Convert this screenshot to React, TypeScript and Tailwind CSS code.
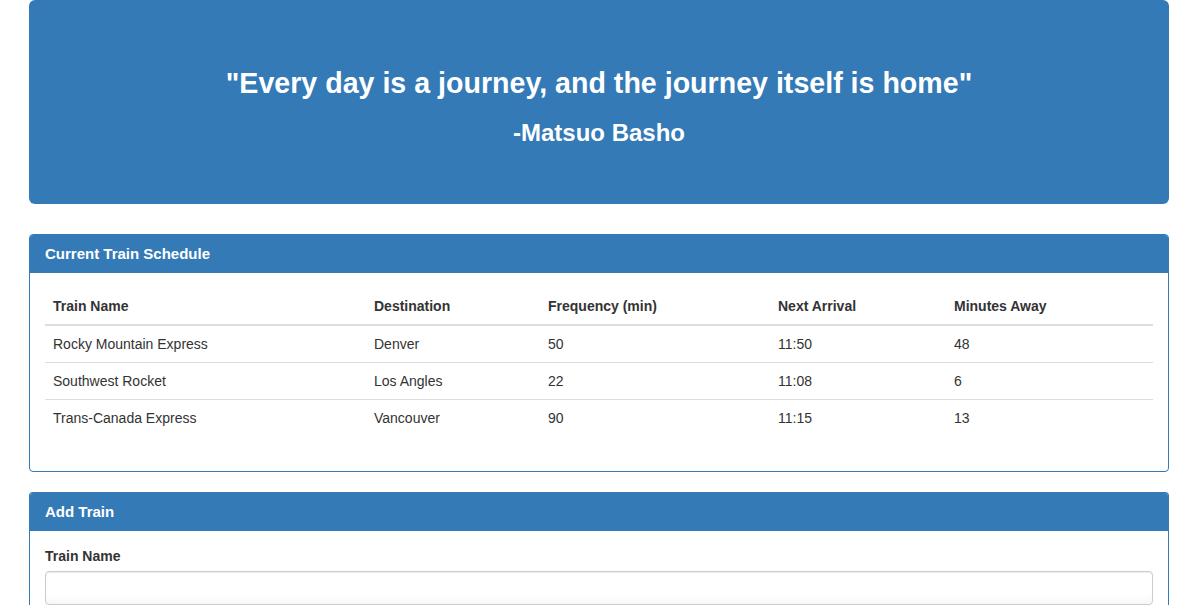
const trains = [
  { name: 'Rocky Mountain Express', destination: 'Denver', frequency: 50, next: '11:50', away: 48 },
  { name: 'Southwest Rocket', destination: 'Los Angles', frequency: 22, next: '11:08', away: 6 },
  { name: 'Trans-Canada Express', destination: 'Vancouver', frequency: 90, next: '11:15', away: 13 },
]

const cols = ['Train Name', 'Destination', 'Frequency (min)', 'Next Arrival', 'Minutes Away']
const widths = ['w-[321px]', 'w-[174px]', 'w-[230px]', 'w-[176px]', 'w-[207px]']

export default function App() {
  return (
    <div className="min-h-[607px] bg-white font-['Liberation_Sans',Arial,sans-serif] text-[14px] leading-[20px] text-[#333]">
      <div className="mx-auto w-[1140px]">
        {/* Jumbotron */}
        <div className="flex h-[204px] flex-col items-center rounded-[6px] bg-[#337ab7] pt-[67px] text-white">
          <h2 className="text-[28.6px] font-bold leading-[33px]">"Every day is a journey, and the journey itself is home"</h2>
          <h3 className="mt-[20px] text-[24px] font-bold leading-[26px]">-Matsuo Basho</h3>
        </div>

        {/* Schedule */}
        <div className="mt-[30px] rounded-[4px] border border-[#337ab7]">
          <div className="rounded-t-[3px] bg-[#337ab7] px-[15px] py-[10px] text-white">
            <h3 className="text-[15px] font-bold leading-[18px]">Current Train Schedule</h3>
          </div>
          <div className="p-[15px]">
            <table className="mb-[20px] w-[1108px] table-fixed border-collapse">
              <thead>
                <tr>
                  {cols.map((c, i) => (
                    <th key={c} className={`${widths[i]} border-b-2 border-[#ddd] p-[8px] text-left font-bold`}>{c}</th>
                  ))}
                </tr>
              </thead>
              <tbody>
                {trains.map((t) => (
                  <tr key={t.name} className="border-t border-[#ddd]">
                    <td className="p-[8px]">{t.name}</td>
                    <td className="p-[8px]">{t.destination}</td>
                    <td className="p-[8px]">{t.frequency}</td>
                    <td className="p-[8px]">{t.next}</td>
                    <td className="p-[8px]">{t.away}</td>
                  </tr>
                ))}
              </tbody>
            </table>
          </div>
        </div>

        {/* Add train */}
        <div className="mt-[20px] rounded-t-[4px] border border-b-0 border-[#337ab7]">
          <div className="rounded-t-[3px] bg-[#337ab7] px-[15px] py-[10px] text-white">
            <h3 className="text-[15px] font-bold leading-[18px]">Add Train</h3>
          </div>
          <div className="px-[15px] pt-[15px]">
            <label className="mb-[5px] block font-bold">Train Name</label>
            <input
              type="text"
              className="block h-[34px] w-full rounded-[4px] border border-[#ccc] bg-white px-[12px] shadow-[inset_0_1px_1px_rgba(0,0,0,0.075),inset_0_-10px_12px_-10px_rgba(0,0,0,0.07)] outline-none"
            />
          </div>
        </div>
      </div>
    </div>
  )
}
